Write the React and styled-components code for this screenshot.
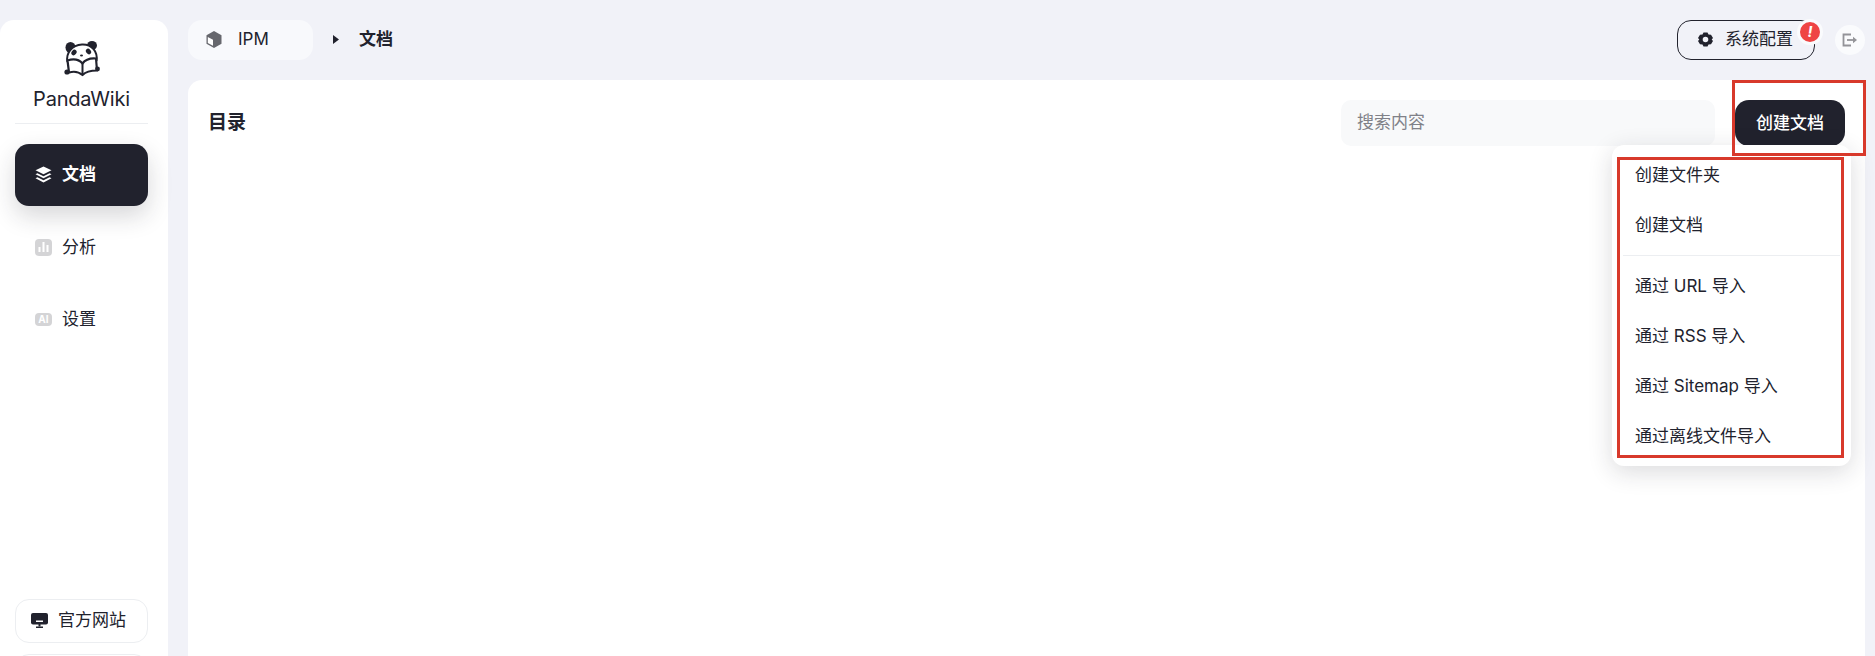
import React from 'react';
import styled, { createGlobalStyle } from 'styled-components';

const DARK = '#21222d';
const FONT = `Inter, "Noto Sans CJK SC", sans-serif`;

const GlobalStyle = createGlobalStyle`
  html, body {
    margin: 0;
    height: 656px;
    overflow: hidden;
    background: #f1f2f8;
    font-family: ${FONT};
    line-height: 1.2;
    color: ${DARK};
  }
  * { box-sizing: border-box; }
`;

const Page = styled.div`
  display: flex;
  height: 700px;
  padding: 20px 10px 0 0;
`;

const Sidebar = styled.aside`
  width: 168px;
  flex-shrink: 0;
  display: flex;
  flex-direction: column;
  padding: 0 20px 2px 15px;
  background: #fff;
  border-radius: 14px 14px 0 0;
`;

const Brand = styled.div`
  display: flex;
  flex-direction: column;
  align-items: center;
  height: 104px;
  padding-top: 21px;
  border-bottom: 1px solid #eceef1;
`;

const BrandName = styled.div`
  margin-top: 10px;
  font-size: 20px;
  line-height: 24px;
  letter-spacing: -0.2px;
`;

const Nav = styled.nav`
  flex: 1;
  display: flex;
  flex-direction: column;
  gap: 10px;
  padding-top: 20px;
`;

const NavItem = styled.div`
  height: 62px;
  display: flex;
  align-items: center;
  gap: 10px;
  padding: 0 0 ${p => (p.$active ? 2 : 0)}px 20px;
  border-radius: 14px;
  font-size: 17px;
  font-weight: ${p => (p.$active ? 700 : 400)};
  color: ${p => (p.$active ? '#fff' : DARK)};
  background: ${p => (p.$active ? DARK : 'transparent')};
  box-shadow: ${p => (p.$active ? '0 10px 25px rgba(33, 34, 45, 0.18)' : 'none')};
`;

const NavBadge = styled.span`
  width: 17px;
  height: ${p => p.$h || 17}px;
  display: flex;
  align-items: center;
  justify-content: center;
  border-radius: 4px;
  background: #d4d4d6;
  color: #fff;
  font-size: 10px;
  font-weight: 700;
  line-height: 1;
`;

const Footer = styled.div`
  display: flex;
  flex-direction: column;
  gap: 11px;
`;

const FooterLink = styled.div`
  height: 44px;
  display: flex;
  align-items: center;
  gap: 10px;
  padding: 0 0 1px 15px;
  border: 1px solid #eceef1;
  border-radius: 14px;
  font-size: 17px;
`;

const Main = styled.main`
  flex: 1;
  min-width: 0;
  margin-left: 20px;
  display: flex;
  flex-direction: column;
`;

const TopBar = styled.header`
  height: 60px;
  display: flex;
  align-items: flex-start;
`;

const ProjectChip = styled.div`
  width: 125px;
  height: 40px;
  display: flex;
  align-items: center;
  gap: 16px;
  padding: 0 0 2px 18px;
  background: #f8f9fc;
  border-radius: 14px;
  font-size: 17px;
`;

const Crumb = styled.div`
  height: 40px;
  display: flex;
  align-items: center;
  gap: 20px;
  margin-left: 20px;
  padding-bottom: 2px;
  font-size: 17px;
  font-weight: 700;
`;

const Actions = styled.div`
  margin-left: auto;
  display: flex;
  align-items: center;
  gap: 20px;
`;

const ConfigButton = styled.div`
  position: relative;
  width: 138px;
  height: 40px;
  display: flex;
  align-items: center;
  gap: 12px;
  padding: 0 0 1px 20px;
  border: 1px solid ${DARK};
  border-radius: 14px;
  font-size: 17px;
`;

const AlertBadge = styled.span`
  position: absolute;
  top: -2px;
  right: -9px;
  width: 26px;
  height: 26px;
  display: flex;
  align-items: center;
  justify-content: center;
  border: 3px solid #fafbfd;
  border-radius: 50%;
  background: #ef4444;
  color: #fff;
  font-size: 15px;
  font-weight: 700;
  font-style: italic;
`;

const LogoutButton = styled.div`
  width: 30px;
  height: 30px;
  display: flex;
  align-items: center;
  justify-content: center;
  border-radius: 50%;
  background: #fafbfd;
`;

const Panel = styled.section`
  position: relative;
  flex: 1;
  background: #fff;
  border-radius: 14px 14px 0 0;
`;

const PanelHead = styled.div`
  display: flex;
  align-items: center;
  gap: 20px;
  padding: 20px 20px 0 20px;
`;

const PanelTitle = styled.h2`
  flex: 1;
  margin: 0;
  font-size: 19px;
  font-weight: 700;
`;

const SearchInput = styled.input`
  width: 374px;
  height: 46px;
  padding: 0 16px 2px;
  border: none;
  outline: none;
  border-radius: 10px;
  background: #f8f9fa;
  font-family: ${FONT};
  font-size: 17px;
  color: ${DARK};

  &::placeholder {
    color: #808188;
    opacity: 1;
  }
`;

const CreateButton = styled.button`
  width: 110px;
  height: 46px;
  padding: 0 0 3px;
  border: none;
  border-radius: 14px;
  background: ${DARK};
  color: #fff;
  font-family: ${FONT};
  font-size: 17px;
  font-weight: 500;
`;

const Menu = styled.div`
  position: absolute;
  top: 65px;
  right: 14px;
  width: 239px;
  padding: 5px 0 5px;
  background: #fff;
  border-radius: 12px;
  box-shadow: 0 6px 24px rgba(33, 34, 45, 0.16);
`;

const MenuItem = styled.div`
  height: 50px;
  display: flex;
  align-items: center;
  padding-left: 23px;
  font-size: 17px;
  color: ${DARK};
`;

const MenuDivider = styled.div`
  height: 1px;
  margin: 5px 11px;
  background: #eceef1;
`;

const Callout = styled.div`
  position: absolute;
  top: ${p => p.$top}px;
  right: ${p => p.$right}px;
  width: ${p => p.$w}px;
  height: ${p => p.$h}px;
  border: 3px solid #d8392b;
  pointer-events: none;
`;

const PandaLogo = () => (
  <svg width="36" height="36" viewBox="0 0 36 36" fill="none">
    <ellipse cx="6.500" cy="6.500" rx="5" ry="5.500" fill={DARK} />
    <ellipse cx="28" cy="4.500" rx="5" ry="4.500" fill={DARK} />
    <path d="M3.500 21C1.500 12 8 4 18 3.500C28 3 34 11 32.500 20" fill="#fff" stroke={DARK} strokeWidth="2" />
    <ellipse cx="10" cy="11.500" rx="2.300" ry="3" fill={DARK} transform="rotate(40 10 11.500)" />
    <ellipse cx="24.500" cy="10.500" rx="2.300" ry="3" fill={DARK} transform="rotate(-40 24.500 10.500)" />
    <ellipse cx="17.500" cy="14.500" rx="1.500" ry="1" fill={DARK} />
    <path d="M18.500 22.500C15 18.500 9.500 17.500 3.500 19.500L5 31.500C10 30 15 31 18.500 34C21.500 31 26 29.500 33 29.500L32 17.500C26.500 17 21.500 18.500 18.500 22.500Z" fill="#fff" stroke={DARK} strokeWidth="2.200" strokeLinejoin="round" />
    <path d="M18.500 22.500V33.500" stroke={DARK} strokeWidth="2" />
    <circle cx="3" cy="31" r="2.600" fill={DARK} />
    <circle cx="33.500" cy="28" r="2.400" fill={DARK} />
  </svg>
);

const LayersIcon = () => (
  <svg width="17" height="17" viewBox="0 0 17 17" fill="#fff">
    <path d="M8.500 0.500L16.500 4.300L8.500 8.300L0.500 4.300Z" />
    <path d="M2.500 7.200L8.500 10.200L14.500 7.200L16.500 8.300L8.500 12.300L0.500 8.300Z" />
    <path d="M2.500 11.200L8.500 14.200L14.500 11.200L16.500 12.300L8.500 16.500L0.500 12.300Z" />
  </svg>
);

const BarsIcon = () => (
  <svg width="11" height="10" viewBox="0 0 11 10" fill="#fff">
    <rect x="0.500" y="5" width="2" height="5" />
    <rect x="4.500" y="0" width="2" height="10" />
    <rect x="8.500" y="3" width="2" height="7" />
  </svg>
);

const MonitorIcon = () => (
  <svg width="17" height="15" viewBox="0 0 17 15" fill={DARK}>
    <rect x="0" y="0" width="17" height="11.500" rx="2" />
    <rect x="5" y="7.500" width="7" height="1.500" fill="#fff" />
    <rect x="7.500" y="11" width="2" height="2.500" />
    <rect x="5" y="13.500" width="7" height="1.500" />
  </svg>
);

const CubeIcon = () => (
  <svg width="16" height="17" viewBox="0 0 16 17">
    <path d="M8 0L15.500 4.200V12.800L8 17L0.500 12.800V4.200Z" fill="#66676d" />
    <path d="M1.800 6L7 8.800V14.800L1.800 11.900Z" fill="#fff" />
  </svg>
);

const CrumbArrow = () => (
  <svg width="6" height="9" viewBox="0 0 6 9" fill={DARK}>
    <path d="M0 0L6 4.500L0 9Z" />
  </svg>
);

// six lobed cog with a round hole, like the one on the config button
const GearIcon = () => (
  <svg width="15" height="15" viewBox="0 0 15 15" fill={DARK}>
    <path
      fillRule="evenodd"
      d="M5.500 0.500H9.500L10.500 2.500L13 2.700L15 6L13.700 7.500L15 9L13 12.300L10.500 12.500L9.500 14.500H5.500L4.500 12.500L2 12.300L0 9L1.300 7.500L0 6L2 2.700L4.500 2.500ZM7.500 4.700A2.800 2.800 0 1 0 7.500 10.300A2.800 2.800 0 1 0 7.500 4.700Z"
    />
  </svg>
);

const LogoutIcon = () => (
  <svg width="16" height="14" viewBox="0 0 16 14" fill="none" stroke="#949499" strokeWidth="1.800">
    <path d="M9 1.500H1.500V12.500H9" />
    <path d="M5 7H12" />
    <path d="M11 3.800L15 7L11 10.200Z" fill="#949499" stroke="none" />
  </svg>
);

const menuTop = ['创建文件夹', '创建文档'];
const menuImport = ['通过 URL 导入', '通过 RSS 导入', '通过 Sitemap 导入', '通过离线文件导入'];

export default function App() {
  return (
    <Page>
      <GlobalStyle />
      <Sidebar>
        <Brand>
          <PandaLogo />
          <BrandName>PandaWiki</BrandName>
        </Brand>
        <Nav>
          <NavItem $active><LayersIcon />文档</NavItem>
          <NavItem><NavBadge><BarsIcon /></NavBadge>分析</NavItem>
          <NavItem><NavBadge $h={13}>AI</NavBadge>设置</NavItem>
        </Nav>
        <Footer>
          <FooterLink><MonitorIcon />官方网站</FooterLink>
          <FooterLink />
        </Footer>
      </Sidebar>
      <Main>
        <TopBar>
          <ProjectChip><CubeIcon />IPM</ProjectChip>
          <Crumb><CrumbArrow />文档</Crumb>
          <Actions>
            <ConfigButton>
              <GearIcon />系统配置
              <AlertBadge>!</AlertBadge>
            </ConfigButton>
            <LogoutButton><LogoutIcon /></LogoutButton>
          </Actions>
        </TopBar>
        <Panel>
          <PanelHead>
            <PanelTitle>目录</PanelTitle>
            <SearchInput placeholder="搜索内容" />
            <CreateButton>创建文档</CreateButton>
          </PanelHead>
          <Menu>
            {menuTop.map(label => <MenuItem key={label}>{label}</MenuItem>)}
            <MenuDivider />
            {menuImport.map(label => <MenuItem key={label}>{label}</MenuItem>)}
          </Menu>
          <Callout $top={0} $right={-1} $w={134} $h={76} />
          <Callout $top={77} $right={21} $w={227} $h={301} />
        </Panel>
      </Main>
    </Page>
  );
}
